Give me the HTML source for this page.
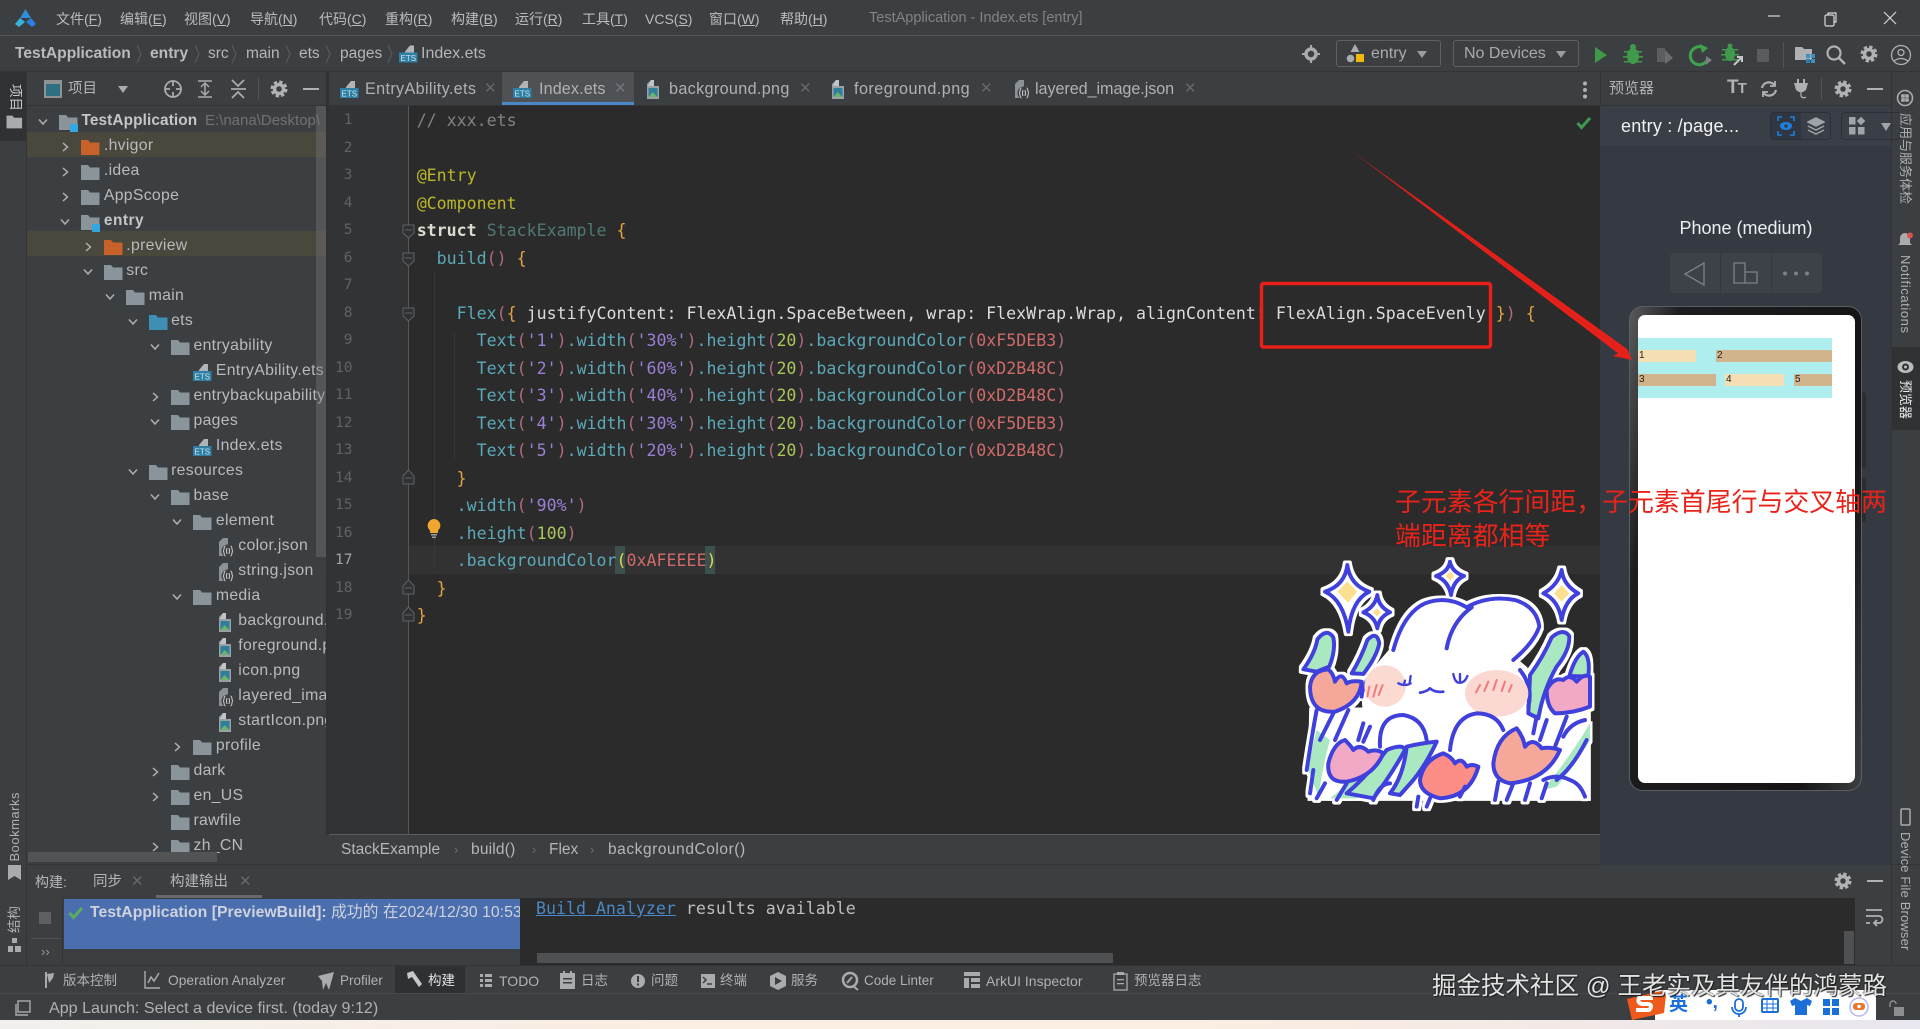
<!DOCTYPE html>
<html lang="zh"><head><meta charset="utf-8"><title>TestApplication</title>
<style>
*{box-sizing:border-box}
html,body{margin:0;padding:0;width:1920px;height:1029px;overflow:hidden;background:#3c3f41}
body{position:relative;font-family:"Liberation Sans","Noto Sans CJK SC",sans-serif;font-size:15px;color:#afb1b3}
.a,.t,svg.a{position:absolute}
.t{white-space:nowrap;line-height:20px;height:20px}
.m{font-size:14px;top:9px;color:#b9bcbe}
.n{top:44px;font-size:15.5px;color:#b4b6b8}
.u{text-decoration:underline}
.tab{top:79px;font-size:16.2px;color:#afb1b3}
.x{top:79px;font-size:15px;color:#65686a}
.r{position:absolute;left:0;height:25px;width:326px;top:calc(110px + 25px*var(--i))}
.r>svg{position:absolute}
.r>.c{left:calc(38px + 22.4px*var(--d));top:7px;width:10px;height:10px}
.r>.f{left:calc(59px + 22.4px*var(--d));top:3px;width:19px;height:19px}
.r>b,.r>span{position:absolute;left:calc(81.5px + 22.4px*var(--d));top:1px;line-height:20px;white-space:nowrap;font-size:15.8px;letter-spacing:.3px;color:#b8babc;font-weight:400}
.r>b{font-weight:700;color:#c3c5c7;font-size:15.4px;letter-spacing:.1px}
.hl{background:#4a473d}
#code{position:absolute;left:416.7px;top:107px;margin:0;font:16.6px/27.5px "DejaVu Sans Mono","Liberation Mono",monospace;color:#dcdcdc;white-space:pre}
#nums{position:absolute;left:326px;width:26.5px;top:107px;font:14.5px/27.5px "DejaVu Sans Mono",monospace;color:#606366;text-align:right}
i{font-style:normal}
.k{color:#5ba9b8}.p{color:#b0697f}.o{color:#e5a341}.s{color:#9a7fd6}.q{color:#a9c65a}.e{color:#cf6a6a}.d{color:#bbb529}.g{color:#7f8283}.h{color:#507874}
.b{top:971px;font-size:13.5px;color:#b0b2b4}
.v{position:absolute;writing-mode:vertical-rl;text-orientation:sideways;white-space:nowrap;font-size:13.5px;color:#aeb0b2;line-height:20px}
.cell{position:absolute;top:253px;height:40px;width:50px;background:#3d4249}
</style></head><body>
<svg width="0" height="0" style="position:absolute">
<symbol id="fo" viewBox="0 0 19 19"><path d="M0 2h7l2 2.5h9.5V17H0z" fill="currentColor"/></symbol>
<symbol id="cd" viewBox="0 0 10 10"><path d="M1 2.5 5 7l4-4.500" fill="none" stroke="#aeb1b4" stroke-width="1.5"/></symbol>
<symbol id="cr" viewBox="0 0 10 10"><path d="M3 1l4.500 4L3 9" fill="none" stroke="#aeb1b4" stroke-width="1.5"/></symbol>
<symbol id="pn" viewBox="0 0 19 19"><path d="M3 4l4-4h3v6h5v13H3z" fill="#9aa0a4"/><path d="M7 0h3v6H4z" fill="#c2c5c7"/><path d="M4.500 8h9v9h-9z" fill="#2d7f9a"/><path d="M4.500 17l4-5 5 5z" fill="#6fb36a"/></symbol>
<symbol id="js" viewBox="0 0 19 19"><path d="M3 4l4-4h5v18H3z" fill="#8b9194"/><circle cx="12" cy="13" r="6.5" fill="#3c3f41"/><path d="M9.500 8c-2 0-1 5-2.500 5 1.500 0 .5 5 2.500 5M14.500 8c2 0 1 5 2.500 5-1.500 0-.5 5-2.500 5M11 10q-1 3 0 6M13 10q1 3 0 6" fill="none" stroke="#c6c8ca" stroke-width="1.100"/></symbol>
<symbol id="gr" viewBox="0 0 18 18"><circle cx="9" cy="9" r="4.500" fill="none" stroke="currentColor" stroke-width="3.5"/><circle cx="9" cy="9" r="7" fill="none" stroke="currentColor" stroke-width="3" stroke-dasharray="3.300 2.200"/></symbol>
<symbol id="et" viewBox="0 0 19 19"><path d="M6 7l5-6h4v7H6z" fill="#b2b5b7"/><rect y="8" width="18.5" height="10" fill="#2e7fa3"/><text x="9.300" y="16.5" font-size="8" font-family="Liberation Sans" fill="#cfe6f0" text-anchor="middle">ETS</text></symbol>
</svg>

<!-- title bar -->
<div class="a" style="left:0;top:35px;width:1920px;height:1px;background:#525456"></div>
<svg class="a" style="left:15px;top:9px" width="21" height="18" viewBox="0 0 21 18"><path d="M10.500 0 16 9H5z" fill="#2f8fd8"/><path d="M5 9 0 15l4 3 6-5z" fill="#36b4d8"/><path d="M16 9l5 6-4 3-6-5z" fill="#2a7fe0"/></svg>
<div class="t m" style="left:56px">文件(<span class="u">F</span>)</div>
<div class="t m" style="left:120px">编辑(<span class="u">E</span>)</div>
<div class="t m" style="left:184px">视图(<span class="u">V</span>)</div>
<div class="t m" style="left:250px">导航(<span class="u">N</span>)</div>
<div class="t m" style="left:319px">代码(<span class="u">C</span>)</div>
<div class="t m" style="left:385px">重构(<span class="u">R</span>)</div>
<div class="t m" style="left:451px">构建(<span class="u">B</span>)</div>
<div class="t m" style="left:515px">运行(<span class="u">R</span>)</div>
<div class="t m" style="left:582px">工具(<span class="u">T</span>)</div>
<div class="t m" style="left:645px">VCS(<span class="u">S</span>)</div>
<div class="t m" style="left:709px">窗口(<span class="u">W</span>)</div>
<div class="t m" style="left:780px">帮助(<span class="u">H</span>)</div>
<div class="t" style="left:869px;top:8px;font-size:14.5px;color:#818385">TestApplication - Index.ets [entry]</div>
<svg class="a" style="left:1765px;top:8px" width="135" height="20" viewBox="0 0 135 20" fill="none" stroke="#d8d8d8" stroke-width="1.200"><path d="M3 8h12"/><rect x="60" y="7" width="9" height="11" rx="1.5"/><path d="M63 7V5h8v9h-2"/><path d="M119 4l12 12m0-12-12 12"/></svg>

<!-- nav bar -->
<div class="t n" style="left:15px;font-weight:700;color:#b9bbbd;font-size:15.6px">TestApplication</div>
<div class="t n" style="left:150px;font-weight:700;color:#b9bbbd;font-size:15.6px">entry</div>
<div class="t n" style="left:208px">src</div>
<div class="t n" style="left:246px">main</div>
<div class="t n" style="left:299px">ets</div>
<div class="t n" style="left:340px">pages</div>
<div class="t n" style="left:421px;font-size:16px">Index.ets</div>
<svg class="a" style="left:0;top:40px" width="400" height="28" fill="none" stroke="#5b5e60" stroke-width="1"><path d="M137 5l4 9-4 9M195 5l4 9-4 9M232 5l4 9-4 9M286 5l4 9-4 9M326 5l4 9-4 9M388 5l4 9-4 9"/></svg>
<svg class="a" style="left:399px;top:44px" width="19" height="20"><use href="#et"/></svg>
<svg class="a" style="left:1302px;top:45px;color:#a9abad" width="18" height="18" viewBox="0 0 18 18"><circle cx="9" cy="9" r="5" fill="none" stroke="#a9abad" stroke-width="3.5"/><path d="M9 0v3M9 15v3M0 9h3M15 9h3" stroke="#a9abad" stroke-width="2"/></svg>
<div class="a" style="left:1335.5px;top:40px;width:105px;height:27px;border:1px solid #5e6163;border-radius:3px"></div>
<svg class="a" style="left:1346px;top:44px" width="20" height="20" viewBox="0 0 20 20"><path d="M9 0l4.500 8h-9z" fill="#a9abad"/><circle cx="4.5" cy="14.5" r="3.800" fill="#a9abad"/><rect x="10" y="10" width="8" height="8" fill="#f2b90d"/></svg>
<div class="t" style="left:1371px;top:44px;font-size:16px;color:#a9abad">entry</div>
<div class="a" style="left:1417px;top:51px;border-left:5.5px solid transparent;border-right:5.5px solid transparent;border-top:7px solid #9a9c9e"></div>
<div class="a" style="left:1453px;top:40px;width:126px;height:27px;border:1px solid #5e6163;border-radius:3px"></div>
<div class="t" style="left:1464px;top:44px;font-size:16px;color:#a9abad">No Devices</div>
<div class="a" style="left:1556px;top:51px;border-left:5.5px solid transparent;border-right:5.5px solid transparent;border-top:7px solid #9a9c9e"></div>
<svg class="a" style="left:1590px;top:42px" width="330" height="26" viewBox="0 0 330 26">
<path d="M5 5l12 8-12 8z" fill="#3e9a4a"/>
<g fill="#3f9a4a"><ellipse cx="43" cy="14" rx="6" ry="8"/><circle cx="43" cy="5" r="3"/><path d="M34 9h18v1.500H34zM33 14h20v1.500H33zM34 19h18v1.500H34z"/></g>
<g fill="#5c5f61"><path d="M67 6h8v14h-8z"/><path d="M75 8l8 8-8 6z" fill="#6a6d6f"/></g>
<path d="M114 6a9 9 0 1 0 4 10" fill="none" stroke="#3fa44f" stroke-width="3"/><path d="M110 2l8 4-6 5z" fill="#3fa44f"/><path d="M116 14l6 4-6 5z" fill="#7c7f81"/>
<g fill="#3f9a4a"><ellipse cx="140" cy="12" rx="5" ry="7"/><circle cx="140" cy="4" r="2.5"/><path d="M132 7h16v1.500h-16zM131 12h18v1.500h-18zM132 17h16v1.500h-16z"/></g><path d="M144 23l8-8m-5 0h5v5" stroke="#c4c6c8" stroke-width="2" fill="none"/>
<rect x="167" y="7" width="12" height="13" fill="#5a5d5f"/>
<rect x="193" y="0" width="1" height="26" fill="#505254"/>
<path d="M205 5h7l2 2h8v11h-17z" fill="#afb1b3"/><rect x="216" y="12" width="4" height="4" fill="#3f8fc0"/><rect x="221" y="12" width="4" height="4" fill="#3f8fc0"/><rect x="216" y="17" width="4" height="4" fill="#2f7fb0"/><rect x="221" y="17" width="4" height="4" fill="#3f8fc0"/>
<circle cx="244" cy="11" r="6.5" fill="none" stroke="#afb1b3" stroke-width="2.200"/><path d="M249 16l6 6" stroke="#afb1b3" stroke-width="2.5"/>
<circle cx="311" cy="13" r="9.5" fill="none" stroke="#afb1b3" stroke-width="1.300"/><circle cx="311" cy="10.5" r="3" fill="none" stroke="#afb1b3" stroke-width="1.300"/><path d="M304 19q7-5 14 0" fill="none" stroke="#afb1b3" stroke-width="1.300"/>
</svg>
<svg class="a" style="left:1860px;top:45px;color:#afb1b3" width="18" height="18"><use href="#gr"/></svg>
<div class="a" style="left:0;top:71px;width:1920px;height:1px;background:#323436"></div>

<!-- left stripe -->
<div class="a" style="left:0;top:72px;width:27px;height:69px;background:#2f3133"></div>
<div class="a" style="left:26px;top:72px;width:1px;height:893px;background:#323436"></div>
<div class="v" style="left:5px;top:84px;color:#c6c8ca;font-size:13.5px">项目</div>
<svg class="a" style="left:6px;top:114px;color:#a9abad" width="17" height="16"><use href="#fo"/></svg>
<div class="v" style="left:5px;top:792px;transform:rotate(180deg);font-size:13px;letter-spacing:.5px">Bookmarks</div>
<svg class="a" style="left:8px;top:865px" width="13" height="15"><path d="M0 0h13v15l-6.500-4L0 15z" fill="#a9abad"/></svg>
<div class="v" style="left:5px;top:906px;transform:rotate(180deg);font-size:13.5px">结构</div>
<svg class="a" style="left:8px;top:938px" width="13" height="15"><path d="M4 0h5v5H4zM0 8h5v6H0zM7 8h6v6H7z" fill="#a9abad"/></svg>

<!-- project panel -->
<div class="a" style="left:27px;top:72px;width:299px;height:34px;background:#3c3f41;border-bottom:1px solid #323436"></div>
<svg class="a" style="left:44px;top:80px" width="18" height="18"><rect width="18" height="18" fill="#8f9295"/><rect x="2" y="4" width="14" height="12" fill="#2f6f82"/></svg>
<div class="t" style="left:68px;top:79px;font-size:14.5px;color:#b4b6b8">项目</div>
<div class="a" style="left:118px;top:86px;border-left:5.5px solid transparent;border-right:5.5px solid transparent;border-top:7px solid #a9abad"></div>
<svg class="a" style="left:162px;top:78px" width="90" height="22" fill="none" stroke="#a9abad" stroke-width="1.800"><circle cx="11" cy="11" r="8"/><path d="M11 3v5M11 14v5M3 11h5M14 11h5"/><path d="M36 3h14M36 19h14M43 6v10M39 9l4-4 4 4M39 13l4 4 4-4" stroke-width="1.5"/><path d="M69 11h15M70 2l6 6 6-6M70 20l6-6 6 6" stroke-width="1.800"/></svg>
<div class="a" style="left:258px;top:78px;width:1px;height:22px;background:#505254"></div>
<svg class="a" style="left:270px;top:80px;color:#afb1b3" width="18" height="18"><use href="#gr"/></svg>
<div class="a" style="left:303px;top:88px;width:16px;height:2px;background:#afb1b3"></div>

<div class="a" style="left:0;top:106px;width:326px;height:759px;overflow:hidden">
<div style="position:absolute;left:27px;top:26px;width:299px;height:24.5px" class="hl"></div>
<div style="position:absolute;left:27px;top:125px;width:299px;height:25px" class="hl"></div>
</div>
<div class="a" id="tree" style="left:0;top:0;width:326px;height:865px;overflow:hidden;color:#8a949b">
<div class="r" style="--i:0;--d:0"><svg class="c"><use href="#cd"/></svg><svg class="f"><use href="#fo"/><rect x="11" y="11" width="8" height="8" fill="#35a7e0"/></svg><b>TestApplication</b><span style="left:205px;color:#6f7274;font-size:15px;letter-spacing:0">E:\nana\Desktop\</span></div>
<div class="r" style="--i:1;--d:1"><svg class="c"><use href="#cr"/></svg><svg class="f" style="color:#c9622a"><use href="#fo"/></svg><span>.hvigor</span></div>
<div class="r" style="--i:2;--d:1"><svg class="c"><use href="#cr"/></svg><svg class="f"><use href="#fo"/></svg><span>.idea</span></div>
<div class="r" style="--i:3;--d:1"><svg class="c"><use href="#cr"/></svg><svg class="f"><use href="#fo"/></svg><span>AppScope</span></div>
<div class="r" style="--i:4;--d:1"><svg class="c"><use href="#cd"/></svg><svg class="f"><use href="#fo"/><rect x="11" y="11" width="8" height="8" fill="#35a7e0"/></svg><b style="letter-spacing:.5px">entry</b></div>
<div class="r" style="--i:5;--d:2"><svg class="c"><use href="#cr"/></svg><svg class="f" style="color:#c9622a"><use href="#fo"/></svg><span>.preview</span></div>
<div class="r" style="--i:6;--d:2"><svg class="c"><use href="#cd"/></svg><svg class="f"><use href="#fo"/></svg><span>src</span></div>
<div class="r" style="--i:7;--d:3"><svg class="c"><use href="#cd"/></svg><svg class="f"><use href="#fo"/></svg><span>main</span></div>
<div class="r" style="--i:8;--d:4"><svg class="c"><use href="#cd"/></svg><svg class="f" style="color:#3f8fb5"><use href="#fo"/></svg><span>ets</span></div>
<div class="r" style="--i:9;--d:5"><svg class="c"><use href="#cd"/></svg><svg class="f"><use href="#fo"/></svg><span>entryability</span></div>
<div class="r" style="--i:10;--d:6"><svg class="f"><use href="#et"/></svg><span>EntryAbility.ets</span></div>
<div class="r" style="--i:11;--d:5"><svg class="c"><use href="#cr"/></svg><svg class="f"><use href="#fo"/></svg><span>entrybackupability</span></div>
<div class="r" style="--i:12;--d:5"><svg class="c"><use href="#cd"/></svg><svg class="f"><use href="#fo"/></svg><span>pages</span></div>
<div class="r" style="--i:13;--d:6"><svg class="f"><use href="#et"/></svg><span>Index.ets</span></div>
<div class="r" style="--i:14;--d:4"><svg class="c"><use href="#cd"/></svg><svg class="f"><use href="#fo"/></svg><span>resources</span></div>
<div class="r" style="--i:15;--d:5"><svg class="c"><use href="#cd"/></svg><svg class="f"><use href="#fo"/></svg><span>base</span></div>
<div class="r" style="--i:16;--d:6"><svg class="c"><use href="#cd"/></svg><svg class="f"><use href="#fo"/></svg><span>element</span></div>
<div class="r" style="--i:17;--d:7"><svg class="f"><use href="#js"/></svg><span>color.json</span></div>
<div class="r" style="--i:18;--d:7"><svg class="f"><use href="#js"/></svg><span>string.json</span></div>
<div class="r" style="--i:19;--d:6"><svg class="c"><use href="#cd"/></svg><svg class="f"><use href="#fo"/></svg><span>media</span></div>
<div class="r" style="--i:20;--d:7"><svg class="f"><use href="#pn"/></svg><span>background.png</span></div>
<div class="r" style="--i:21;--d:7"><svg class="f"><use href="#pn"/></svg><span>foreground.png</span></div>
<div class="r" style="--i:22;--d:7"><svg class="f"><use href="#pn"/></svg><span>icon.png</span></div>
<div class="r" style="--i:23;--d:7"><svg class="f"><use href="#js"/></svg><span>layered_image.json</span></div>
<div class="r" style="--i:24;--d:7"><svg class="f"><use href="#pn"/></svg><span>startIcon.png</span></div>
<div class="r" style="--i:25;--d:6"><svg class="c"><use href="#cr"/></svg><svg class="f"><use href="#fo"/></svg><span>profile</span></div>
<div class="r" style="--i:26;--d:5"><svg class="c"><use href="#cr"/></svg><svg class="f"><use href="#fo"/></svg><span>dark</span></div>
<div class="r" style="--i:27;--d:5"><svg class="c"><use href="#cr"/></svg><svg class="f"><use href="#fo"/></svg><span>en_US</span></div>
<div class="r" style="--i:28;--d:5"><svg class="f"><use href="#fo"/></svg><span>rawfile</span></div>
<div class="r" style="--i:29;--d:5"><svg class="c"><use href="#cr"/></svg><svg class="f"><use href="#fo"/></svg><span>zh_CN</span></div>
</div>
<div class="a" style="left:316px;top:106px;width:10px;height:451px;background:rgba(120,122,124,.38)"></div>
<div class="a" style="left:28px;top:852px;width:189px;height:10px;background:#515355"></div>
<div class="a" style="left:27px;top:864px;width:1893px;height:1px;background:#323436"></div>

<!-- tabs -->
<div class="a" style="left:326px;top:72px;width:3px;height:763px;background:#2f3133"></div>
<div class="a" style="left:502px;top:72px;width:132px;height:34px;background:#4e5254"></div>
<div class="a" style="left:502px;top:102px;width:132px;height:4px;background:#4a88c7"></div>
<svg class="a" style="left:340px;top:80px" width="19" height="19"><use href="#et"/></svg>
<div class="t tab" style="left:365px;letter-spacing:.34px">EntryAbility.ets</div><div class="t x" style="left:484px">✕</div>
<svg class="a" style="left:513px;top:80px" width="19" height="19"><use href="#et"/></svg>
<div class="t tab" style="left:539px;letter-spacing:.1px">Index.ets</div><div class="t x" style="left:614px;color:#73767a">✕</div>
<svg class="a" style="left:644px;top:80px" width="19" height="19"><use href="#pn"/></svg>
<div class="t tab" style="left:669px;letter-spacing:.33px">background.png</div><div class="t x" style="left:799px">✕</div>
<svg class="a" style="left:829px;top:80px" width="19" height="19"><use href="#pn"/></svg>
<div class="t tab" style="left:854px;letter-spacing:.45px">foreground.png</div><div class="t x" style="left:980px">✕</div>
<svg class="a" style="left:1012px;top:80px" width="19" height="19"><use href="#js"/></svg>
<div class="t tab" style="left:1035px;letter-spacing:-.07px">layered_image.json</div><div class="t x" style="left:1184px">✕</div>
<svg class="a" style="left:1582px;top:81px" width="6" height="18" fill="#afb1b3"><circle cx="3" cy="2.5" r="2"/><circle cx="3" cy="9" r="2"/><circle cx="3" cy="15.5" r="2"/></svg>
<div class="a" style="left:329px;top:105px;width:1271px;height:1px;background:#323436"></div>

<!-- editor -->
<div class="a" style="left:329px;top:106px;width:79px;height:728px;background:#313335"></div>
<div class="a" style="left:408px;top:106px;width:1192px;height:728px;background:#2b2b2b"></div>
<div class="a" style="left:408px;top:546px;width:1192px;height:28px;background:#323232"></div>
<div class="a" style="left:408px;top:106px;width:1px;height:728px;background:#555759"></div>
<div class="a" style="left:434px;top:272px;width:1px;height:302px;background:#373737"></div>
<div class="a" style="left:454px;top:333px;width:1px;height:125px;background:#373737"></div>
<div class="a" style="left:615px;top:546px;width:10px;height:28px;background:#3b514d"></div>
<div class="a" style="left:705px;top:546px;width:10px;height:28px;background:#3b514d"></div>
<div id="nums">1<br>2<br>3<br>4<br>5<br>6<br>7<br>8<br>9<br>10<br>11<br>12<br>13<br>14<br>15<br>16<br>17<br>18<br>19</div>
<div class="a" style="left:326px;width:26.5px;top:547px;font:14.5px/27.5px 'DejaVu Sans Mono',monospace;color:#a4a3a3;text-align:right;background:#313335">17</div>
<pre id="code"><i class="g">// xxx.ets</i>

<i class="d">@Entry</i>
<i class="d">@Component</i>
<b style="color:#dddcd0">struct</b> <i class="h">StackExample</i> <i class="o">{</i>
  <i class="k">build</i><i class="p">()</i> <i class="o">{</i>

    <i class="k">Flex</i><i class="p">(</i><i class="o">{</i> justifyContent: FlexAlign.SpaceBetween, wrap: FlexWrap.Wrap, alignContent: FlexAlign.SpaceEvenly <i class="o">}</i><i class="p">)</i> <i class="o">{</i>
      <i class="k">Text</i><i class="p">(</i><i class="s">'1'</i><i class="p">)</i><i class="k">.width</i><i class="p">(</i><i class="s">'30%'</i><i class="p">)</i><i class="k">.height</i><i class="p">(</i><i class="q">20</i><i class="p">)</i><i class="k">.backgroundColor</i><i class="p">(</i><i class="e">0xF5DEB3</i><i class="p">)</i>
      <i class="k">Text</i><i class="p">(</i><i class="s">'2'</i><i class="p">)</i><i class="k">.width</i><i class="p">(</i><i class="s">'60%'</i><i class="p">)</i><i class="k">.height</i><i class="p">(</i><i class="q">20</i><i class="p">)</i><i class="k">.backgroundColor</i><i class="p">(</i><i class="e">0xD2B48C</i><i class="p">)</i>
      <i class="k">Text</i><i class="p">(</i><i class="s">'3'</i><i class="p">)</i><i class="k">.width</i><i class="p">(</i><i class="s">'40%'</i><i class="p">)</i><i class="k">.height</i><i class="p">(</i><i class="q">20</i><i class="p">)</i><i class="k">.backgroundColor</i><i class="p">(</i><i class="e">0xD2B48C</i><i class="p">)</i>
      <i class="k">Text</i><i class="p">(</i><i class="s">'4'</i><i class="p">)</i><i class="k">.width</i><i class="p">(</i><i class="s">'30%'</i><i class="p">)</i><i class="k">.height</i><i class="p">(</i><i class="q">20</i><i class="p">)</i><i class="k">.backgroundColor</i><i class="p">(</i><i class="e">0xF5DEB3</i><i class="p">)</i>
      <i class="k">Text</i><i class="p">(</i><i class="s">'5'</i><i class="p">)</i><i class="k">.width</i><i class="p">(</i><i class="s">'20%'</i><i class="p">)</i><i class="k">.height</i><i class="p">(</i><i class="q">20</i><i class="p">)</i><i class="k">.backgroundColor</i><i class="p">(</i><i class="e">0xD2B48C</i><i class="p">)</i>
    <i class="o">}</i>
    <i class="k">.width</i><i class="p">(</i><i class="s">'90%'</i><i class="p">)</i>
    <i class="k">.height</i><i class="p">(</i><i class="q">100</i><i class="p">)</i>
    <i class="k">.backgroundColor</i><i style="color:#e8d44d">(</i><i class="e">0xAFEEEE</i><i style="color:#e8d44d">)</i>
  <i class="o">}</i>
<i class="o">}</i></pre>
<svg class="a" style="left:402px;top:106px" width="14" height="728" fill="#2f3133" stroke="#606366" stroke-width="1"><path d="M1 119h11v8l-5.500 5L1 127zM3 124h7M1 147h11v8l-5.500 5L1 155zM3 152h7M1 202h11v8l-5.500 5L1 210zM3 207h7"/><path d="M1 378v-8l5.500-6 5.500 6v8zM3 372h7M1 488v-8l5.500-6 5.500 6v8zM3 482h7M1 515v-8l5.500-6 5.500 6v8zM3 509h7"/></svg>
<svg class="a" style="left:427px;top:519px" width="14" height="20"><path d="M7 0a6.500 6.500 0 0 1 4 11.500V14H3v-2.500A6.500 6.500 0 0 1 7 0z" fill="#f0a732"/><path d="M4 15h6v1.500H4zM5 17.500h4V19H5z" fill="#9a9c9e"/></svg>
<svg class="a" style="left:1576px;top:116px" width="16" height="14"><path d="M1.500 7l4 4.500L14 2" fill="none" stroke="#3f9a4f" stroke-width="3"/></svg>

<!-- breadcrumb -->
<div class="a" style="left:329px;top:834px;width:1271px;height:1px;background:#5a5c5e"></div>
<div class="t" style="left:341px;top:840px;font-size:15.5px;color:#b4b6b8">StackExample</div>
<div class="t" style="left:454px;top:840px;font-size:13px;color:#6d7072">›</div>
<div class="t" style="left:471px;top:840px;font-size:15.5px;letter-spacing:.2px;color:#b4b6b8">build()</div>
<div class="t" style="left:532px;top:840px;font-size:13px;color:#6d7072">›</div>
<div class="t" style="left:549px;top:840px;font-size:15.5px;color:#b4b6b8">Flex</div>
<div class="t" style="left:590px;top:840px;font-size:13px;color:#6d7072">›</div>
<div class="t" style="left:608px;top:840px;font-size:15.5px;letter-spacing:.55px;color:#b4b6b8">backgroundColor()</div>

<!-- preview panel -->
<div class="a" style="left:1600px;top:72px;width:291px;height:34px;background:#3c3f41;border-left:1px solid #323436"></div>
<div class="t" style="left:1609px;top:79px;font-size:15px;color:#afb1b3">预览器</div>
<div class="t" style="left:1727px;top:78px;font-size:19px;font-weight:700;color:#afb1b3;letter-spacing:-1px">T<span style="font-size:15px">T</span></div>
<svg class="a" style="left:1760px;top:80px" width="18" height="18" fill="none" stroke="#afb1b3" stroke-width="2.200"><path d="M2 8a7 7 0 0 1 13-2M16 10a7 7 0 0 1-13 2"/><path d="M15 1v5h-5M3 17v-5h5" stroke-width="1.800"/></svg>
<svg class="a" style="left:1793px;top:78px" width="17" height="22" fill="none"><path d="M1 5h14l-2 7-3 2H6l-3-2z" fill="#afb1b3"/><path d="M5 1v4M11 1v4" stroke="#afb1b3" stroke-width="2"/><path d="M8 14v4q2 3 5 1" stroke="#afb1b3" stroke-width="1.200"/></svg>
<div class="a" style="left:1821px;top:78px;width:1px;height:22px;background:#505254"></div>
<svg class="a" style="left:1834px;top:80px;color:#afb1b3" width="18" height="18"><use href="#gr"/></svg>
<div class="a" style="left:1867px;top:88px;width:16px;height:2px;background:#afb1b3"></div>
<div class="a" style="left:1600px;top:105px;width:291px;height:1px;background:#323436"></div>
<div class="a" style="left:1600px;top:106px;width:291px;height:759px;background:#353a42"></div>
<div class="a" style="left:1600px;top:106px;width:291px;height:40px;background:#3a3f47"></div>
<div class="t" style="left:1621px;top:116px;font-size:18px;letter-spacing:.2px;color:#f2f2f2">entry : /page...</div>
<div class="a" style="left:1770px;top:112px;width:61px;height:28px;border:1px solid #2c3036;border-radius:4px;background:#3a3f47"></div>
<div class="a" style="left:1771px;top:113px;width:30px;height:26px;background:#2f3742;border-radius:3px 0 0 3px"></div>
<svg class="a" style="left:1777px;top:116px" width="18" height="20" fill="none" stroke="#1f7fe0" stroke-width="1.600"><path d="M1 5V1h4M13 1h4v4M17 15v4h-4M5 19H1v-4"/><ellipse cx="9" cy="10" rx="6" ry="4" fill="#1f7fe0" stroke="none"/><circle cx="9" cy="10" r="1.800" fill="#3a3f47" stroke="none"/></svg>
<svg class="a" style="left:1807px;top:117px" width="18" height="18" fill="none" stroke="#a0a3a7" stroke-width="1.5"><path d="M9 1l8 4-8 4-8-4z" fill="#a0a3a7"/><path d="M1 9l8 4 8-4M1 13l8 4 8-4"/></svg>
<div class="a" style="left:1841px;top:112px;width:60px;height:28px;border:1px solid #2c3036;border-radius:4px"></div>
<svg class="a" style="left:1849px;top:117px" width="16" height="18" fill="#a0a3a7"><rect width="6.5" height="7.5"/><rect x="9" y="1" width="6" height="6" transform="rotate(45 12 4)"/><rect y="10" width="6.5" height="7.5"/><rect x="9" y="10" width="6.5" height="7.5"/></svg>
<div class="a" style="left:1881px;top:123px;border-left:5.5px solid transparent;border-right:5.5px solid transparent;border-top:8px solid #a0a3a7"></div>
<div class="t" style="left:1646px;top:218px;width:200px;text-align:center;font-size:18px;color:#eceff2">Phone (medium)</div>
<div class="cell" style="left:1670px;border-radius:4px 0 0 4px"></div>
<div class="cell" style="left:1721px"></div>
<div class="cell" style="left:1772px;border-radius:0 4px 4px 0"></div>
<svg class="a" style="left:1670px;top:253px" width="152" height="40" fill="none" stroke="#7d8187" stroke-width="1.300"><path d="M34 10v22L15 21zM64 10h11v20H64zM75 19h12v11H75"/><g fill="#7d8187" stroke="none"><circle cx="115" cy="20.500" r="2"/><circle cx="126" cy="20.500" r="2"/><circle cx="137" cy="20.500" r="2"/></g></svg>
<div class="a" style="left:1862px;top:392px;width:4px;height:76px;background:#2a2c2e;border-radius:0 3px 3px 0"></div>
<div class="a" style="left:1862px;top:478px;width:4px;height:44px;background:#2a2c2e;border-radius:0 3px 3px 0"></div>
<div class="a" style="left:1629px;top:306px;width:233px;height:485px;border-radius:14px;border:1px solid #5b5e62;background:linear-gradient(100deg,#58595b 0,#1d1d1f 16%,#141415 80%,#3d3e40 100%)"></div>
<div class="a" style="left:1638px;top:315px;width:217px;height:468px;background:#fff;border-radius:7px"></div>
<div class="a" style="left:1638px;top:338px;width:194px;height:60px;background:#afeeee"></div>
<div class="a" style="left:1638px;top:350px;width:58px;height:12px;background:#f5deb3"></div>
<div class="a" style="left:1716px;top:350px;width:116px;height:12px;background:#d2b48c"></div>
<div class="a" style="left:1638px;top:374px;width:78px;height:12px;background:#d2b48c"></div>
<div class="a" style="left:1725px;top:374px;width:59px;height:12px;background:#f5deb3"></div>
<div class="a" style="left:1794px;top:374px;width:38px;height:12px;background:#d2b48c"></div>
<div class="t" style="left:1639px;top:346px;font-size:10px;color:#222">1</div>
<div class="t" style="left:1717px;top:346px;font-size:10px;color:#222">2</div>
<div class="t" style="left:1639px;top:370px;font-size:10px;color:#222">3</div>
<div class="t" style="left:1726px;top:370px;font-size:10px;color:#222">4</div>
<div class="t" style="left:1795px;top:370px;font-size:10px;color:#222">5</div>

<!-- right stripe -->
<div class="a" style="left:1891px;top:72px;width:1px;height:893px;background:#323436"></div>
<svg class="a" style="left:1896px;top:89px" width="18" height="18" fill="none" stroke="#a9abad" stroke-width="1.600"><circle cx="9" cy="9" r="7.5"/><path d="M6 6h2v2H6zM10 6h2v2h-2zM6 10h2v2H6zM10 10h2v2h-2z" fill="#a9abad"/></svg>
<div class="v" style="left:1895px;top:113px;font-size:13px">应用与服务体检</div>
<svg class="a" style="left:1897px;top:232px" width="17" height="17"><path d="M8 1a5 5 0 0 1 5 5v5l2 2H1l2-2V6a5 5 0 0 1 5-5z" fill="#a9abad"/><circle cx="13" cy="3.5" r="3" fill="#d9534f"/></svg>
<div class="v" style="left:1895px;top:255px;font-size:13px;letter-spacing:.6px">Notifications</div>
<div class="a" style="left:1892px;top:347px;width:28px;height:83px;background:#2f3133"></div>
<svg class="a" style="left:1897px;top:360px" width="17" height="14"><ellipse cx="8.5" cy="7" rx="8" ry="6" fill="#b9bbbd"/><circle cx="8.5" cy="7" r="3.5" fill="#2f3133"/><circle cx="8.5" cy="7" r="1.5" fill="#b9bbbd"/></svg>
<div class="v" style="left:1895px;top:380px;color:#eceeef;font-size:13px">预览器</div>
<svg class="a" style="left:1900px;top:808px" width="11" height="18" fill="none" stroke="#a9abad" stroke-width="1.5"><rect x="1" y="1" width="9" height="16" rx="1"/></svg>
<div class="v" style="left:1895px;top:832px;font-size:13px;letter-spacing:.15px">Device File Browser</div>

<!-- build panel -->
<div class="a" style="left:27px;top:865px;width:1864px;height:33px;background:#3c3f41"></div>
<div class="t" style="left:35px;top:872px;font-size:14px;color:#b4b6b8">构建:</div>
<div class="t" style="left:93px;top:872px;font-size:14.5px;color:#b4b6b8">同步</div><div class="t x" style="left:131px;top:872px">✕</div>
<div class="t" style="left:170px;top:872px;font-size:14.5px;color:#b4b6b8">构建输出</div><div class="t x" style="left:239px;top:872px">✕</div>
<div class="a" style="left:156px;top:895px;width:106px;height:3px;background:#66686a"></div>
<svg class="a" style="left:1834px;top:872px;color:#afb1b3" width="18" height="18"><use href="#gr"/></svg>
<div class="a" style="left:1867px;top:880px;width:16px;height:2px;background:#afb1b3"></div>
<div class="a" style="left:27px;top:898px;width:1864px;height:67px;background:#3c3f41"></div>
<div class="a" style="left:39px;top:912px;width:12px;height:12px;background:#5e6163"></div>
<div class="a" style="left:31px;top:938px;width:31px;height:1px;background:#505254"></div>
<div class="t" style="left:41px;top:942px;font-size:13px;color:#9a9c9e">››</div>
<div class="a" style="left:62px;top:898px;width:1px;height:67px;background:#323436"></div>
<div class="a" style="left:64px;top:899px;width:456px;height:50px;background:#4b6eaf"></div>
<svg class="a" style="left:68px;top:906px" width="16" height="14"><path d="M1.500 7l4 4.500L14 2" fill="none" stroke="#5aad5f" stroke-width="3"/></svg>
<div class="a" style="left:90px;top:901px;width:430px;height:24px;overflow:hidden;white-space:nowrap;line-height:24px;font-size:15.8px;color:#cdd2dc"><b>TestApplication [PreviewBuild]:</b> 成功的 在2024/12/30 10:53</div>
<div class="a" style="left:520px;top:898px;width:1335px;height:67px;background:#2b2b2b"></div>
<div class="a" style="left:536px;top:895px;font:16.6px/27px 'DejaVu Sans Mono',monospace;color:#bcbec0;white-space:pre"><span style="color:#4a88c7;text-decoration:underline">Build Analyzer</span> results available</div>
<div class="a" style="left:537px;top:953px;width:576px;height:10px;background:#4e5052"></div>
<div class="a" style="left:1844px;top:931px;width:10px;height:33px;background:#4e5052"></div>
<div class="a" style="left:1855px;top:898px;width:36px;height:67px;background:#3c3f41"></div>
<svg class="a" style="left:1865px;top:908px" width="19" height="20" fill="none" stroke="#afb1b3" stroke-width="1.800"><path d="M1 2h16M1 8h13a3 3 0 0 1 0 7H9M12 12l-3 3 3 3M1 15h4"/></svg>

<!-- bottom tool strip -->
<div class="a" style="left:0;top:965px;width:1920px;height:1px;background:#323436"></div>
<div class="a" style="left:395px;top:966px;width:70px;height:28px;background:#2e3032"></div>
<div class="a" style="left:0;top:993px;width:1920px;height:1px;background:#48494b"></div>
<svg class="a" style="left:0;top:968px" width="1140" height="26" fill="#a9abad">
<path d="M45 4h2v16h-2zM47 6l7-1-1 5-4 5z"/>
<path d="M145 3v17h15" fill="none" stroke="#a9abad" stroke-width="1.400"/><path d="M148 15l3-6 3 4 5-8" fill="none" stroke="#a9abad" stroke-width="1.5"/>
<path d="M318 8l16-4-5 18-3-7-3 7-1-9z"/>
<path d="M407 5l6-2 9 13-3 3-7-10-4 2z" fill="#c4c6c8"/>
<path d="M480 6h3v3h-3zM485 6h7v3h-7zM480 11h3v3h-3zM485 11h7v3h-7zM480 16h3v3h-3zM485 16h7v3h-7z"/>
<path d="M560 5h15v16h-15z"/><path d="M563 3h2v4h-2zM570 3h2v4h-2z"/><path d="M563 10h9v1.500h-9zM563 14h9v1.500h-9z" fill="#3c3f41"/>
<circle cx="638" cy="13" r="7"/><rect x="637" y="8" width="2" height="6" fill="#3c3f41"/><rect x="637" y="15.5" width="2" height="2" fill="#3c3f41"/>
<rect x="701" y="6" width="14" height="14"/><path d="M703 9l3 3-3 3M707 16h5" fill="none" stroke="#3c3f41" stroke-width="1.5"/>
<path d="M778 4l8 4v10l-8 4-8-4V8z"/><path d="M775 9l7 4-7 4z" fill="#3c3f41"/>
<circle cx="850" cy="12" r="7" fill="none" stroke="#a9abad" stroke-width="2.5"/><path d="M847 15l5-6M853 18l5 4" fill="none" stroke="#a9abad" stroke-width="2"/>
<path d="M964 4h16v4h-16zM964 10h5v10h-5zM971 10h9v4h-9zM971 16h9v4h-9z"/>
<path d="M1114 6h13v16h-13z" fill="none" stroke="#a9abad" stroke-width="1.300"/><path d="M1117 4h7v3h-7zM1117 11h7v1.200h-7zM1117 15h7v1.200h-7z"/>
</svg>
<div class="t b" style="left:63px">版本控制</div>
<div class="t b" style="left:168px;font-size:13.8px">Operation Analyzer</div>
<div class="t b" style="left:340px">Profiler</div>
<div class="t b" style="left:428px;color:#e0e2e4">构建</div>
<div class="t b" style="left:499px;font-size:14px">TODO</div>
<div class="t b" style="left:581px">日志</div>
<div class="t b" style="left:651px">问题</div>
<div class="t b" style="left:720px">终端</div>
<div class="t b" style="left:791px">服务</div>
<div class="t b" style="left:864px">Code Linter</div>
<div class="t b" style="left:986px;font-size:14px">ArkUI Inspector</div>
<div class="t b" style="left:1134px">预览器日志</div>

<!-- status bar -->
<svg class="a" style="left:15px;top:1000px" width="16" height="16" fill="none" stroke="#a9abad" stroke-width="1.400"><rect x="3" y="1" width="12" height="11"/><path d="M1 4v11h12"/></svg>
<div class="t" style="left:49px;top:998px;font-size:16.1px;color:#afb1b3">App Launch: Select a device first. (today 9:12)</div>
<svg class="a" style="left:1889px;top:1000px" width="16" height="16"><rect x="5" y="7" width="10" height="9" fill="#8c8f91"/><path d="M1 7V4a3 3 0 0 1 6 0" fill="none" stroke="#8c8f91" stroke-width="1.5"/></svg>
<div class="a" style="left:0;top:1020px;width:1920px;height:9px;background:linear-gradient(90deg,#f2f0ee 0,#fbeee2 35%,#fbeee2 62%,#f6eae4 75%,#e8e6ef 100%)"></div>

<!-- IME bar -->
<div class="a" style="left:1655px;top:990px;width:221px;height:30px;background:#fff"></div>
<svg class="a" style="left:1625px;top:985px" width="251" height="36" viewBox="0 0 251 36">
<path d="M2 14l34-8 5 4-2 18-32 7z" fill="#ef5a1c"/><path d="M28 13H14q-2 5 3 6h7q4 2 0 6H11" fill="none" stroke="#fff" stroke-width="4"/>
<g fill="none" stroke="#1b6fd8" stroke-width="2"><path d="M114 14a4 4 0 0 0-4 4v4a4 4 0 0 0 8 0v-4a4 4 0 0 0-4-4zM107 22a7 7 0 0 0 14 0M114 29v3" stroke-width="1.800"/><rect x="137" y="14" width="16" height="13" rx="1"/><path d="M137 19h16M137 23h16M142 14v13M148 14v13" stroke-width="1"/></g>
<path d="M170 13l6 3 6-3 5 3-2 5-3-1v10h-12V20l-3 1-2-5z" fill="#1b6fd8"/>
<g fill="#1b6fd8"><rect x="198" y="14" width="7" height="7"/><rect x="207" y="14" width="7" height="7"/><rect x="198" y="23" width="7" height="7"/><rect x="207" y="23" width="7" height="7"/></g>
<circle cx="234" cy="22" r="9" fill="#fff" stroke="#b9b6e8" stroke-width="1.5"/><rect x="228" y="18" width="12" height="7" rx="3" fill="#e8772c"/><circle cx="234" cy="21.5" r="1.800" fill="#fff"/>
</svg>
<div class="t" style="left:1669px;top:994px;height:22px;line-height:22px;font-size:19px;font-weight:700;color:#1b6fd8">英</div>
<div class="t" style="left:1706px;top:992px;height:22px;line-height:22px;font-size:19px;font-weight:700;color:#1b6fd8">•,</div>

<!-- annotations -->
<svg class="a" style="left:0;top:0" width="1920" height="1029">
<rect x="1261.5" y="283.5" width="229" height="63.5" rx="2" fill="none" stroke="#e8201a" stroke-width="3.5"/>
<path d="M1353 152 1622 351 1619 354z" fill="#e8201a"/>
<path d="M1353 152 1627 349 1632 360 1613 356 1622 351z" fill="#e8201a"/>
</svg>
<div class="a" style="left:1395px;top:486px;width:520px;font-size:25.9px;line-height:34px;color:#e8231a;white-space:nowrap">子元素各行间距&#65292;子元素首尾行与交叉轴两<br>端距离都相等</div>

<!-- sticker -->
<svg class="a" style="left:1280px;top:550px" width="350" height="270" viewBox="0 0 1050 810">
<defs><filter id="hl" x="-5%" y="-5%" width="110%" height="110%"><feMorphology in="SourceAlpha" operator="dilate" radius="8" result="m"/><feFlood flood-color="#fff"/><feComposite in2="m" operator="in" result="w"/><feMerge><feMergeNode in="w"/><feMergeNode in="SourceGraphic"/></feMerge></filter></defs>
<g filter="url(#hl)" stroke="#3f40dc" stroke-width="12" stroke-linecap="round" stroke-linejoin="round">
<path d="M95 480H925V745H90Z" fill="#fff" stroke="none"/>
<path d="M70 358Q105 310 112 268Q140 232 160 262Q168 300 148 350L110 365Z" fill="#a9e8c0"/>
<path d="M215 370Q245 320 262 270Q290 240 298 280Q290 320 250 372Z" fill="#a9e8c0"/>
<path d="M750 375Q790 320 815 262Q850 232 868 258Q870 300 830 350Q790 420 775 505L745 490Z" fill="#a9e8c0"/>
<path d="M868 378Q885 320 910 305Q932 320 925 380Z" fill="#a9e8c0"/>
<path d="M790 720Q870 620 930 520V570Q880 650 830 710Z" fill="#a9e8c0" stroke="none"/>
<path d="M115 740Q130 640 150 570L110 540Q90 620 85 660Z" fill="#a9e8c0" stroke="none"/>
<path d="M150 745L280 640L300 700L230 745Z" fill="#a9e8c0" stroke="none"/>
<path d="M340 300Q370 190 435 160Q500 135 560 172Q625 135 705 150Q770 170 778 230Q760 280 700 330L735 360Q760 430 700 500Q600 560 480 555Q330 560 260 490Q240 420 280 370Z" fill="#fff" stroke="none"/>
<path d="M340 300Q370 190 435 160Q500 135 560 172Q625 135 705 150Q770 170 778 230Q760 280 700 330" fill="none"/>
<path d="M500 295Q515 215 575 172" fill="none"/>
<path d="M245 440Q250 390 290 360M720 360Q760 410 745 470" fill="none"/>
<ellipse cx="315" cy="408" rx="62" ry="62" fill="#fbdad2" stroke="none"/>
<ellipse cx="650" cy="430" rx="95" ry="70" fill="#fbd8d2" stroke="none"/>
<path d="M268 410l-6 30M290 405l-10 35M308 405l-12 30M600 405l-12 22M625 395l-12 28M650 390l-10 30M675 395l-10 28M695 405l-8 20" stroke="#f5787a" stroke-width="6" fill="none"/>
<path d="M355 400Q375 410 392 400M375 392l-3 10M392 378l-3 20M520 372Q525 400 540 398Q555 398 562 378M540 372v20" stroke-width="7" fill="none"/>
<path d="M420 428Q440 425 450 415Q465 428 490 425" stroke-width="8" fill="none"/>
<path d="M300 590Q295 495 370 495Q430 505 440 570" fill="#fff"/>
<path d="M510 600Q520 500 590 490Q650 490 670 540" fill="#fff"/>
<path d="M330 730Q370 680 380 590Q420 580 470 575Q440 640 400 690L360 735Z" fill="#a9e8c0"/>
<path d="M200 730Q260 680 320 600Q370 580 375 600Q330 680 280 745Z" fill="#a9e8c0"/>
<path d="M90 410Q95 360 145 358Q160 370 165 395Q185 360 200 400Q215 390 245 395Q240 460 165 485Q90 490 90 410Z" fill="#f5a79a"/>
<path d="M800 420Q820 380 850 390Q870 370 890 395Q910 370 930 380V470Q880 490 825 490Q800 470 800 420Z" fill="#f2a9c6"/>
<path d="M145 640Q160 580 195 570Q215 590 220 600Q240 580 265 605Q290 595 310 610Q280 680 200 695Q140 700 145 640Z" fill="#f2a9c6"/>
<path d="M640 640Q650 560 710 535Q730 560 735 590Q760 560 785 595Q810 590 840 600Q800 690 690 700Q640 690 640 640Z" fill="#f5a79a"/>
<path d="M420 690Q430 630 490 610Q515 620 525 640Q545 620 560 650Q575 640 595 650Q570 740 480 745Q420 730 420 690Z" fill="#fd8d87"/>
<path d="M110 480Q95 560 80 660M160 490L120 570M205 480L165 570M100 660L90 730M135 700L110 745M200 700L170 750M280 750Q300 700 330 700M415 740l-5 30M450 745l-10 25M540 740l15-30M655 695l-10 55M700 700l-20 50M750 700l-15 50M790 690Q830 670 870 690Q900 700 915 740M800 700l-15 45M860 500l-35 90M915 510Q870 520 850 560M920 570Q880 650 830 690M770 500l-10 50M800 510l-20 60M250 520l-15 50M270 530l-20 45" fill="none"/>
<path d="M202 45Q210 105 268 125Q215 150 205 245Q190 150 135 125Q195 105 202 45Z" fill="#fff"/>
<path d="M202 95 232 125 204 158 172 125Z" fill="#fde08f" stroke="none"/>
<path d="M292 135Q296 170 330 187Q298 200 292 235Q285 200 250 187Q285 170 292 135Z" fill="#fff"/>
<path d="M291 175 303 187 291 199 279 187Z" fill="#fde08f" stroke="none"/>
<path d="M510 35Q515 65 552 78Q520 92 513 135Q505 92 468 78Q505 65 510 35Z" fill="#fff"/>
<path d="M510 65 523 78 510 92 497 78Z" fill="#fde08f" stroke="none"/>
<path d="M845 60Q850 105 895 130Q855 150 845 210Q835 150 790 130Q835 105 845 60Z" fill="#fff"/>
<path d="M845 105 868 130 845 155 822 130Z" fill="#fde08f" stroke="none"/>
</g>
</svg>

<!-- watermark -->
<div class="t" style="left:1432px;top:972px;height:30px;line-height:30px;font-size:24.5px;color:#e2e2e2;text-shadow:1px 1px 1px #1c1c1c,-1px -1px 1px rgba(30,30,30,.5)">掘金技术社区 @ 王老实及其友伴的鸿蒙路</div>
</body></html>
